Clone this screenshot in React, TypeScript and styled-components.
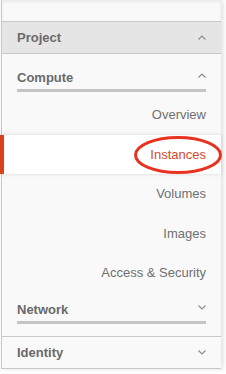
import styled, { createGlobalStyle } from "styled-components";

const GlobalStyle = createGlobalStyle`
  html, body {
    margin: 0;
    padding: 0;
    background: #ffffff;
  }
  body {
    font-family: "Liberation Sans", Arial, sans-serif;
  }
`;

type Item = { label: string; active?: boolean };

const computeItems: Item[] = [
  { label: "Overview" },
  { label: "Instances", active: true },
  { label: "Volumes" },
  { label: "Images" },
  { label: "Access & Security" },
];

const Chevron = ({ up }: { up?: boolean }) => (
  <svg width="8" height="5" viewBox="0 0 8 5">
    <polyline
      points={up ? "0.5,4.5 4,1 7.5,4.5" : "0.5,0.5 4,4 7.5,0.5"}
      fill="none"
      stroke="#8a8a8a"
      strokeWidth="1.1"
    />
  </svg>
);

export default function App() {
  return (
    <>
      <GlobalStyle />
      <Page>
        <Panel>
          <TopSpace />
          <PanelHeader $active>
            <span>Project</span>
            <Chevron up />
          </PanelHeader>
          <PanelBody>
            <GroupHeader $height={38}>
              <span>Compute</span>
              <Chevron up />
            </GroupHeader>
            <ItemList>
              {computeItems.map((item) => (
                <NavItem key={item.label} $active={item.active}>
                  {item.label}
                  {item.active && (
                    <Circle width="90" height="40" viewBox="0 0 90 40">
                      <ellipse
                        cx="44"
                        cy="20"
                        rx="42.5"
                        ry="17.5"
                        fill="none"
                        stroke="#e8321f"
                        strokeWidth="3"
                      />
                    </Circle>
                  )}
                </NavItem>
              ))}
            </ItemList>
            <GroupHeader $height={31}>
              <span>Network</span>
              <Chevron />
            </GroupHeader>
          </PanelBody>
          <PanelHeader>
            <span>Identity</span>
            <Chevron />
          </PanelHeader>
        </Panel>
      </Page>
    </>
  );
}

const Page = styled.div`
  width: 226px;
  height: 374px;
  overflow: hidden;
  padding-left: 1px;
  box-sizing: border-box;
  background: #ffffff;
`;

const Panel = styled.div`
  width: 219px;
  background: #f9f9f9;
  border-left: 1px solid #c8c8c8;
  box-shadow: 2px 0 5px rgba(0, 0, 0, 0.13);
  color: #6b6b6b;
`;

const TopSpace = styled.div`
  height: 21px;
  border-bottom: 1px solid #c9c9c9;
  box-shadow: inset 0 2px 3px rgba(0, 0, 0, 0.06);
`;

const PanelHeader = styled.div<{ $active?: boolean }>`
  height: 31px;
  display: flex;
  align-items: center;
  justify-content: space-between;
  padding: 0 15px;
  background: ${({ $active }) => ($active ? "#e5e5e5" : "#f9f9f9")};
  border-bottom: 1px solid #c9c9c9;
  font-size: 13px;
  font-weight: bold;
  color: #6a6a6a;
`;

const PanelBody = styled.div`
  padding-bottom: 12px;
  border-bottom: 1px solid #c9c9c9;
`;

const GroupHeader = styled.div<{ $height: number }>`
  height: ${({ $height }) => $height}px;
  margin: 0 15px;
  box-sizing: border-box;
  display: flex;
  align-items: flex-end;
  justify-content: space-between;
  padding-bottom: 3px;
  border-bottom: 3px solid #c4c4c4;
  font-size: 13px;
  line-height: 16px;
  font-weight: bold;
  color: #6a6a6a;

  svg {
    margin-bottom: 8px;
  }
`;

const ItemList = styled.div`
  padding-top: 3px;
`;

const NavItem = styled.div<{ $active?: boolean }>`
  position: relative;
  height: 39.5px;
  display: flex;
  align-items: center;
  justify-content: flex-end;
  padding-right: 15px;
  font-size: 13px;
  color: ${({ $active }) => ($active ? "#d5482c" : "#6f6f6f")};
  background: ${({ $active }) => ($active ? "#ffffff" : "transparent")};
  box-shadow: ${({ $active }) =>
    $active ? "0 0 4px rgba(0, 0, 0, 0.14), inset 4px 0 0 #d9411f" : "none"};
  margin-left: ${({ $active }) => ($active ? "-2px" : "0")};
  z-index: ${({ $active }) => ($active ? 1 : 0)};
`;

const Circle = styled.svg`
  position: absolute;
  right: -3px;
  top: 0;
`;
